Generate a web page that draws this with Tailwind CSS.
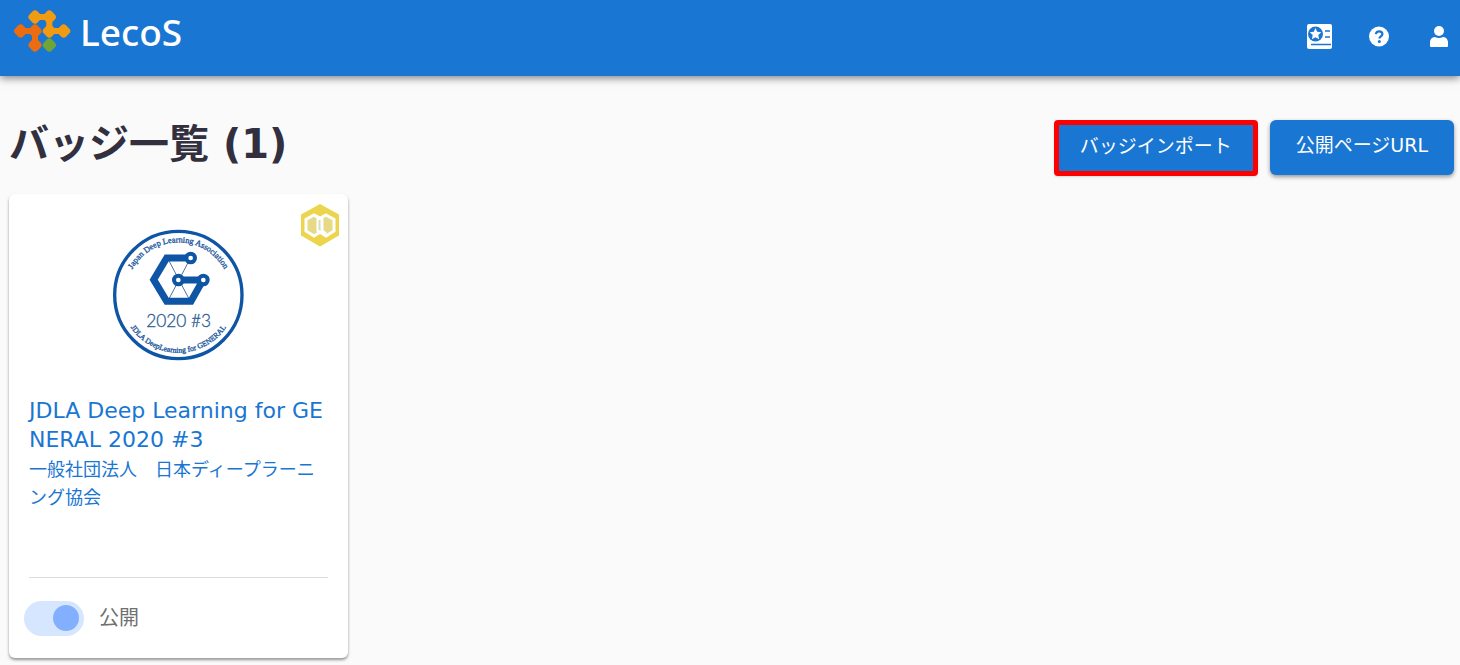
<!DOCTYPE html>
<html lang="ja">
<head>
  <meta charset="UTF-8" />
  <meta name="viewport" content="width=device-width, initial-scale=1.0" />
  <title>バッジ一覧 - LecoS</title>
  <script src="https://cdn.jsdelivr.net/npm/@tailwindcss/browser@4"></script>
</head>
<body class="min-h-screen bg-[#fafafa] font-['DejaVu_Sans','Noto_Sans_CJK_JP',sans-serif] text-[#32303f]">
  <!-- Header -->
  <header class="flex h-[76px] items-start justify-between bg-[#1976d2] pl-3 pr-[7px] shadow-[0_2px_8px_rgba(0,0,0,0.5)]">
    <a href="#" class="flex items-center gap-2 pt-2 text-white">
      <svg class="h-12 w-15" viewBox="0 0 180 144" aria-hidden="true">
        <g fill="none" stroke-width="18">
          <path d="M69 27h43v42h43" stroke="#f39a13" />
          <path d="M26 69h43v42" stroke="#ec6c10" />
        </g>
        <g fill="#f39a13">
          <rect x="52" y="10" width="34" height="34" rx="11" transform="rotate(45 69 27)" />
          <rect x="95" y="10" width="34" height="34" rx="11" transform="rotate(45 112 27)" />
          <rect x="95" y="52" width="34" height="34" rx="11" transform="rotate(45 112 69)" />
          <rect x="138" y="52" width="34" height="34" rx="11" transform="rotate(45 155 69)" />
        </g>
        <g fill="#ec6c10">
          <rect x="9" y="52" width="34" height="34" rx="11" transform="rotate(45 26 69)" />
          <rect x="52" y="52" width="34" height="34" rx="11" transform="rotate(45 69 69)" />
          <rect x="52" y="94" width="34" height="34" rx="11" transform="rotate(45 69 111)" />
        </g>
        <rect x="95" y="94" width="34" height="34" rx="11" transform="rotate(45 112 111)" fill="#6fa436" />
      </svg>
      <span class="font-['Noto_Sans',sans-serif] text-[37px] leading-12 font-medium">LecoS</span>
    </a>
    <nav class="flex items-center gap-8 pt-[22px] text-white">
      <a href="#" aria-label="バッジ">
        <svg class="size-7" viewBox="0 0 28 28">
          <rect x="2" y="2" width="25" height="25" rx="2" fill="currentColor" />
          <circle cx="10.500" cy="12" r="7.500" fill="#1976d2" />
          <path d="M10.500 6l1.700 3.800 4.100.5-3 2.800.8 4.100-3.600-2-3.600 2 .8-4.100-3-2.800 4.100-.5z" fill="currentColor" />
          <path d="M20 9h5M20 15h5M6 22.500h20" stroke="#1976d2" stroke-width="1.500" />
        </svg>
      </a>
      <a href="#" aria-label="ヘルプ">
        <svg class="size-7" viewBox="0 0 28 28">
          <circle cx="14" cy="14.500" r="10" fill="currentColor" />
          <path d="M10.800 12.200c.3-2 1.600-2.900 3.300-2.900 2 0 3.300 1.100 3.300 2.800 0 2.300-3 2.200-3 4.500" fill="none" stroke="#1976d2" stroke-width="2.200" />
          <circle cx="14.300" cy="19.500" r="1.500" fill="#1976d2" />
        </svg>
      </a>
      <a href="#" aria-label="アカウント">
        <svg class="size-7" viewBox="0 0 28 28" fill="currentColor">
          <circle cx="14" cy="9" r="5" />
          <path d="M5 24v-3.500c0-3.300 2.300-5.500 5-5.500 2.500 1.300 5.500 1.300 8 0 2.700 0 5 2.200 5 5.500V24a1 1 0 0 1-1 1H6a1 1 0 0 1-1-1z" />
        </svg>
      </a>
    </nav>
  </header>

  <main class="pr-1.5 pb-2 pl-[9px]">
    <!-- Title and actions -->
    <div class="flex items-start justify-between pt-11">
      <h1 class="text-[40px] leading-12 font-bold">バッジ一覧 (1)</h1>
      <div class="flex gap-3">
        <button type="button" class="h-14 rounded-sm border-5 border-[#fe0000] bg-[#1976d2] px-[21px] pb-1 text-[19px] text-white shadow">バッジインポート</button>
        <button type="button" class="h-[55px] rounded-md bg-[#1976d2] px-[26px] pb-1 text-[19px] text-white shadow-[0_2px_4px_rgba(0,0,0,0.4)]">公開ページURL</button>
      </div>
    </div>

    <!-- Badge list -->
    <ul class="mt-[18px] flex flex-wrap gap-4">
      <li class="relative w-[339px] rounded-md bg-white shadow-[0_2px_3px_rgba(0,0,0,0.4)]">
        <svg class="absolute top-2 right-2 h-12 w-10" viewBox="0 0 40 48" aria-hidden="true">
          <path d="M20 3l18 10v20L20 43.500 2 33V13z" fill="#ecd54c" stroke="#ecd54c" stroke-width="2" stroke-linejoin="round" />
          <path d="M14 13l8 4.500v11.500l-8 5-8-5V17.500z" fill="#e8d988" stroke="#fff" stroke-width="3" />
          <path d="M26 13l8 4.500v11.500l-8 5-8-5V17.500z" fill="#e8d988" stroke="#fff" stroke-width="3" />
          <path d="M20 18v10" stroke="#d5dfb8" stroke-width="3" />
          <path d="M14 13l8 4.500v11.500l4 3" fill="none" stroke="#fff" stroke-width="3" />
        </svg>
        <a href="#" class="block px-5 pt-7 text-[#1976d2]">
          <svg class="mx-auto size-[146px]" viewBox="3 0 438 438" role="img" aria-label="JDLA Deep Learning for GENERAL 2020 #3">
            <defs>
              <path id="arc-top" d="M62 219a158 158 0 0 1 316 0" />
              <path id="arc-bottom" d="M47 219a173 173 0 0 0 346 0" />
            </defs>
            <circle cx="220" cy="219" r="191" fill="#fff" stroke="#0f55a5" stroke-width="10" />
            <g fill="#22589c" stroke="#22589c" class="font-['Liberation_Serif',serif]" text-anchor="middle">
              <text class="text-[25px]"><textPath href="#arc-top" startOffset="50%">Japan Deep Learning Association</textPath></text>
              <text class="text-[23px]"><textPath href="#arc-bottom" startOffset="50%">JDLA DeepLearning for GENERAL</textPath></text>
            </g>
            <path d="M188 109l68 129M256 109l-68 129" fill="none" stroke="#52719a" stroke-width="3" />
            <path d="M257 108h-72l-39 65 39 65h73l36-64h-73" fill="none" stroke="#0f55a5" stroke-width="21" />
            <g fill="#fff" stroke="#0f55a5" stroke-width="12">
              <circle cx="257" cy="108" r="13" />
              <circle cx="220" cy="174" r="13" />
              <circle cx="295" cy="174" r="13" />
            </g>
            <text x="221" y="314" text-anchor="middle" fill="#2f5f96" stroke="#2f5f96" class="font-['Lato',sans-serif] text-[52px] font-light">2020 #3</text>
          </svg>
          <div class="mt-7 h-[182px] border-b border-[#dcdcdc] break-all">
            <h2 class="text-[22px] leading-[29px]">JDLA Deep Learning for GENERAL 2020 #3</h2>
            <p class="pt-0.5 text-[18px] leading-7">一般社団法人　日本ディープラーニング協会</p>
          </div>
        </a>
        <label class="flex h-20 items-center gap-[15px] pl-[15px] text-[20px] text-[#707070]">
          <input type="checkbox" checked class="flex h-[35px] w-15 appearance-none items-center rounded-full bg-[#d7e6ff] px-[5px] before:size-[26px] before:rounded-full before:bg-[#82b0ff] checked:justify-end" />
          公開
        </label>
      </li>
    </ul>
  </main>
</body>
</html>
